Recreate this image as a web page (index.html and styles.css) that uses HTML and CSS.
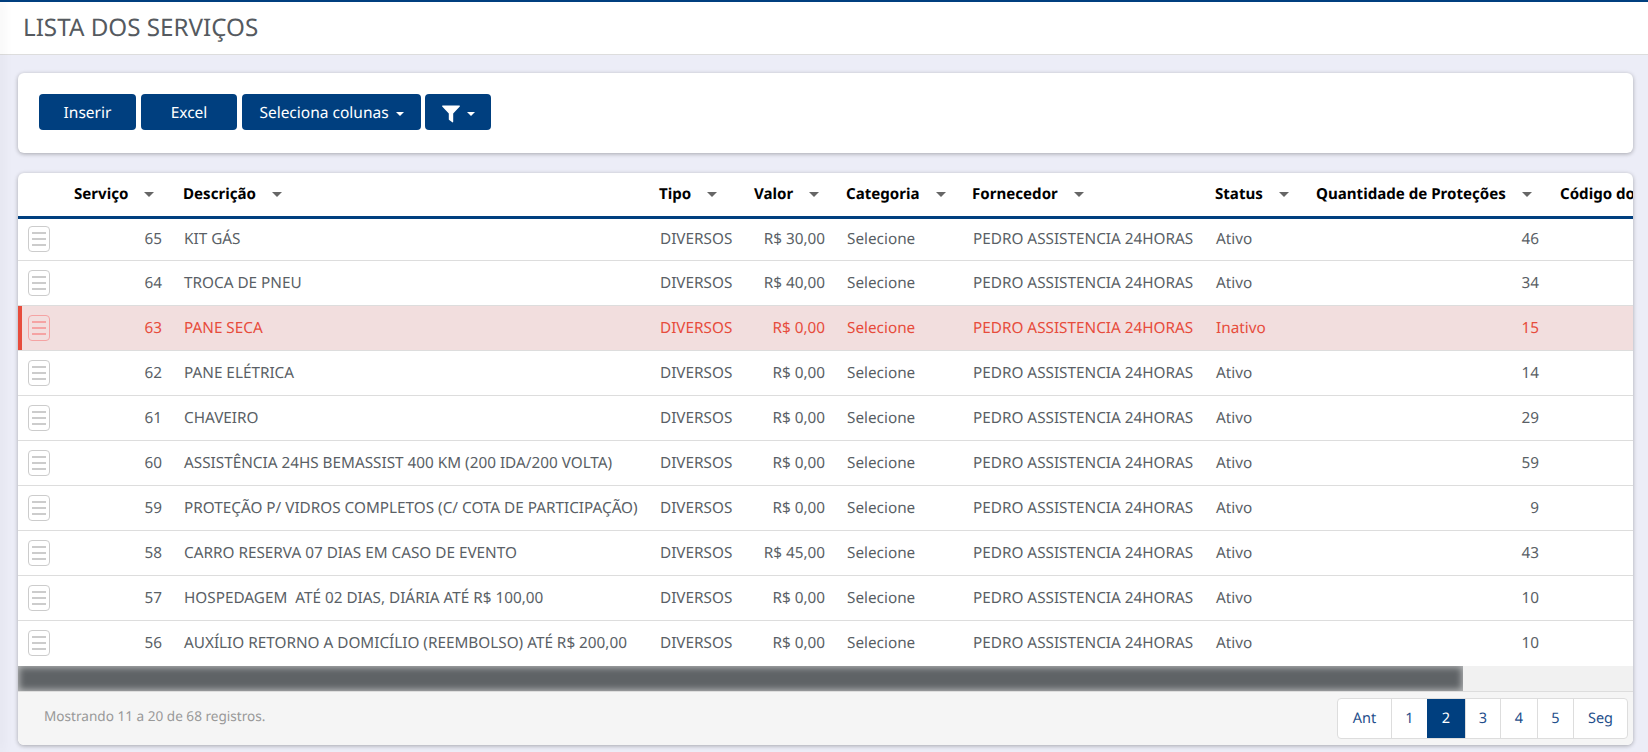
FILE: index.html
```html
<!DOCTYPE html>
<html lang="pt-BR">
  <head>
    <meta charset="utf-8"/>
    <title>Lista dos Serviços</title>
    <link rel="stylesheet" href="styles.css">
  </head>
  <body>
    <div id="header">
      <h1 id="title">LISTA DOS SERVIÇOS</h1>
    </div>
    <div id="content">
      <div class="card" id="toolbar">
        <button class="btn btn-insert">Inserir</button>
        <button class="btn btn-excel">Excel</button>
        <button class="btn btn-columns">Seleciona colunas <span class="btn-caret"></span></button>
        <button class="btn btn-filter">
          <svg class="filter-icon" viewBox="0 0 18 18"><path d="M0.6 0.5h16.8c.5 0 .7.6.4 1L11.2 8.6v8.2c0 .5-.5.7-.9.5l-3.1-2.2c-.2-.1-.4-.4-.4-.6V8.6L0.2 1.5c-.3-.4-.1-1 .4-1z"/></svg>
          <span class="btn-caret"></span>
        </button>
      </div>
      <div class="card" id="list">
        <div id="table-scroll">
          <table id="services">
            <colgroup>
              <col class="col-menu"><col class="col-id"><col class="col-desc"><col class="col-type"><col class="col-value"><col class="col-cat"><col class="col-supplier"><col class="col-status"><col class="col-qty"><col class="col-code">
            </colgroup>
            <thead>
              <tr>
                <th></th>
                <th>Serviço<span class="sort"></span></th>
                <th>Descrição<span class="sort"></span></th>
                <th>Tipo<span class="sort"></span></th>
                <th>Valor<span class="sort"></span></th>
                <th>Categoria<span class="sort"></span></th>
                <th>Fornecedor<span class="sort"></span></th>
                <th>Status<span class="sort"></span></th>
                <th>Quantidade de Proteções<span class="sort"></span></th>
                <th>Código do Serviço<span class="sort"></span></th>
              </tr>
            </thead>
            <tbody>
              <tr>
                <td><span class="menu-btn"><i></i><i></i><i></i></span></td>
                <td class="num">65</td><td>KIT GÁS</td><td>DIVERSOS</td><td class="num">R$ 30,00</td><td>Selecione</td><td>PEDRO ASSISTENCIA 24HORAS</td><td>Ativo</td><td class="num">46</td><td></td>
              </tr>
              <tr>
                <td><span class="menu-btn"><i></i><i></i><i></i></span></td>
                <td class="num">64</td><td>TROCA DE PNEU</td><td>DIVERSOS</td><td class="num">R$ 40,00</td><td>Selecione</td><td>PEDRO ASSISTENCIA 24HORAS</td><td>Ativo</td><td class="num">34</td><td></td>
              </tr>
              <tr class="inactive">
                <td><span class="menu-btn"><i></i><i></i><i></i></span></td>
                <td class="num">63</td><td>PANE SECA</td><td>DIVERSOS</td><td class="num">R$ 0,00</td><td>Selecione</td><td>PEDRO ASSISTENCIA 24HORAS</td><td>Inativo</td><td class="num">15</td><td></td>
              </tr>
              <tr>
                <td><span class="menu-btn"><i></i><i></i><i></i></span></td>
                <td class="num">62</td><td>PANE ELÉTRICA</td><td>DIVERSOS</td><td class="num">R$ 0,00</td><td>Selecione</td><td>PEDRO ASSISTENCIA 24HORAS</td><td>Ativo</td><td class="num">14</td><td></td>
              </tr>
              <tr>
                <td><span class="menu-btn"><i></i><i></i><i></i></span></td>
                <td class="num">61</td><td>CHAVEIRO</td><td>DIVERSOS</td><td class="num">R$ 0,00</td><td>Selecione</td><td>PEDRO ASSISTENCIA 24HORAS</td><td>Ativo</td><td class="num">29</td><td></td>
              </tr>
              <tr>
                <td><span class="menu-btn"><i></i><i></i><i></i></span></td>
                <td class="num">60</td><td>ASSISTÊNCIA 24HS BEMASSIST 400 KM (200 IDA/200 VOLTA)</td><td>DIVERSOS</td><td class="num">R$ 0,00</td><td>Selecione</td><td>PEDRO ASSISTENCIA 24HORAS</td><td>Ativo</td><td class="num">59</td><td></td>
              </tr>
              <tr>
                <td><span class="menu-btn"><i></i><i></i><i></i></span></td>
                <td class="num">59</td><td>PROTEÇÃO P/ VIDROS COMPLETOS (C/ COTA DE PARTICIPAÇÃO)</td><td>DIVERSOS</td><td class="num">R$ 0,00</td><td>Selecione</td><td>PEDRO ASSISTENCIA 24HORAS</td><td>Ativo</td><td class="num">9</td><td></td>
              </tr>
              <tr>
                <td><span class="menu-btn"><i></i><i></i><i></i></span></td>
                <td class="num">58</td><td>CARRO RESERVA 07 DIAS EM CASO DE EVENTO</td><td>DIVERSOS</td><td class="num">R$ 45,00</td><td>Selecione</td><td>PEDRO ASSISTENCIA 24HORAS</td><td>Ativo</td><td class="num">43</td><td></td>
              </tr>
              <tr>
                <td><span class="menu-btn"><i></i><i></i><i></i></span></td>
                <td class="num">57</td><td>HOSPEDAGEM&nbsp; ATÉ 02 DIAS, DIÁRIA ATÉ R$ 100,00</td><td>DIVERSOS</td><td class="num">R$ 0,00</td><td>Selecione</td><td>PEDRO ASSISTENCIA 24HORAS</td><td>Ativo</td><td class="num">10</td><td></td>
              </tr>
              <tr>
                <td><span class="menu-btn"><i></i><i></i><i></i></span></td>
                <td class="num">56</td><td>AUXÍLIO RETORNO A DOMICÍLIO (REEMBOLSO) ATÉ R$ 200,00</td><td>DIVERSOS</td><td class="num">R$ 0,00</td><td>Selecione</td><td>PEDRO ASSISTENCIA 24HORAS</td><td>Ativo</td><td class="num">10</td><td></td>
              </tr>
            </tbody>
          </table>
        </div>
        <div id="scrollbar"><div id="scrollbar-thumb"></div></div>
        <div id="list-footer">
          <span id="info">Mostrando 11 a 20 de 68 registros.</span>
          <div id="pagination">
            <a class="page page-prev">Ant</a>
            <a class="page page-1">1</a>
            <a class="page page-2 active">2</a>
            <a class="page page-3">3</a>
            <a class="page page-4">4</a>
            <a class="page page-5">5</a>
            <a class="page page-next">Seg</a>
          </div>
        </div>
      </div>
    </div>
  </body>
</html>
```

FILE: styles.css
```css
* {
  box-sizing: border-box;
}
html, body {
  height: 100%;
}
body {
  margin: 0;
  background-color: #ecedf7;
  font-family: "Noto Sans", Arial, sans-serif;
  font-size: 15.3px;
  color: #5a5f66;
  text-rendering: geometricPrecision;
  overflow: hidden;
}
/* sombra do menu lateral recolhido */
body::before {
  content: "";
  position: fixed;
  top: 0;
  left: 0;
  bottom: 0;
  width: 1px;
  margin-left: -1px;
  box-shadow: 0 0 12px rgba(0, 0, 0, .3);
}
#header {
  height: 55px;
  background-color: #fff;
  border-top: 2px solid #003f7f;
  border-bottom: 1px solid #ddd;
  padding-left: 23px;
}
#title {
  margin: 0;
  font-size: 24.2px;
  font-weight: 400;
  line-height: 52px;
  color: #555a60;
}
#content {
  padding: 18px 15px 0 18px;
}
.card {
  background-color: #fff;
  border-radius: 6px;
  box-shadow: 0 1px 4px rgba(0, 0, 0, .3);
}
#toolbar {
  display: flex;
  height: 80px;
  padding: 21px;
  margin-bottom: 20px;
}
.btn {
  height: 36px;
  padding: 0;
  margin-right: 5px;
  border: none;
  border-radius: 4px;
  background-color: #003f7f;
  color: #fff;
  font-family: inherit;
  font-size: 15.5px;
  text-rendering: geometricPrecision;
}
.btn-insert {
  width: 97px;
}
.btn-excel {
  width: 96px;
}
.btn-columns {
  width: 179px;
}
.btn-filter {
  width: 66px;
  margin-right: 0;
  margin-left: -1px;
  padding-left: 1px;
}
.btn-caret {
  display: inline-block;
  margin-left: 3px;
  vertical-align: middle;
  border-top: 4px solid #fff;
  border-left: 4px solid transparent;
  border-right: 4px solid transparent;
}
.filter-icon {
  width: 18px;
  height: 18px;
  fill: #fff;
  vertical-align: middle;
}
#list {
  height: 572px;
  overflow: hidden;
}
#table-scroll {
  overflow: hidden;
  padding-bottom: 1px;
}
#scrollbar {
  height: 25px;
  background-color: #f1f1f1;
}
#scrollbar-thumb {
  width: 1445px;
  height: 100%;
  background-color: #5f6366;
  box-shadow: inset 0 0 7px 1px rgba(255, 255, 255, .6);
}
#services {
  width: 1808px;
  table-layout: fixed;
  border-collapse: collapse;
}
.col-menu { width: 46px; }
.col-id { width: 109px; }
.col-desc { width: 476px; }
.col-type { width: 95px; }
.col-value { width: 92px; }
.col-cat { width: 126px; }
.col-supplier { width: 243px; }
.col-status { width: 101px; }
.col-qty { width: 244px; }
.col-code { width: 276px; }
th {
  height: 44px;
  padding: 0 10px 1px;
  border-bottom: 3px solid #003f7f;
  color: #000;
  font-size: 15.1px;
  font-weight: 700;
  text-align: left;
  white-space: nowrap;
}
.sort {
  display: inline-block;
  margin-left: 16px;
  vertical-align: middle;
  border-top: 5px solid #666;
  border-left: 5px solid transparent;
  border-right: 5px solid transparent;
}
td {
  height: 45px;
  padding: 0 11px;
  border-top: 1px solid #ddd;
  white-space: nowrap;
}
tbody tr:first-child td {
  height: 43px;
  padding-bottom: 1px;
  border-top: none;
}
td.num {
  text-align: right;
}
td:first-child {
  padding: 0 0 0 10px;
}
.menu-btn {
  display: flex;
  flex-direction: column;
  justify-content: center;
  gap: 4px;
  width: 22px;
  height: 26px;
  padding: 0 3px;
  border: 1px solid #ccc;
  border-radius: 4px;
}
.menu-btn i {
  display: block;
  height: 2px;
  background-color: #ccc;
}
tr.inactive td {
  background-color: #f2dede;
  color: #e74c3c;
}
tr.inactive td:first-child {
  box-shadow: inset 4px 0 0 #e74c3c;
}
tr.inactive .menu-btn {
  border-color: #f5a3a3;
}
tr.inactive .menu-btn i {
  background-color: #f5a3a3;
}
#list-footer {
  display: flex;
  justify-content: space-between;
  height: 54px;
  padding: 6px 5px 0 26px;
  background-color: #f5f5f5;
  border-top: 1px solid #ddd;
}
#info {
  color: #999;
  font-size: 13.6px;
  line-height: 36px;
}
#pagination {
  display: flex;
  height: 41px;
  background-color: #fff;
  border: 1px solid #ddd;
  border-radius: 4px;
}
.page {
  display: block;
  font-size: 14.5px;
  line-height: 38px;
  text-align: center;
  color: #1f4f8c;
  border-left: 1px solid #ddd;
}
.page-prev { width: 53px; border-left: none; }
.page-1 { width: 36px; }
.page-2 { width: 38px; }
.page-3 { width: 35px; }
.page-4 { width: 37px; }
.page-5 { width: 36px; }
.page-next { width: 54px; }
.page.active {
  background-color: #003f7f;
  border-left: none;
  color: #fff;
}
```
